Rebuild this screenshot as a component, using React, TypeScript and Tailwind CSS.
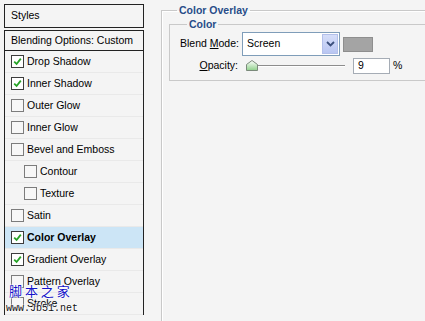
import React from 'react';

type StyleItem = { label: string; checked: boolean; indent?: boolean; active?: boolean };

const items: StyleItem[] = [
  { label: 'Drop Shadow', checked: true },
  { label: 'Inner Shadow', checked: true },
  { label: 'Outer Glow', checked: false },
  { label: 'Inner Glow', checked: false },
  { label: 'Bevel and Emboss', checked: false },
  { label: 'Contour', checked: false, indent: true },
  { label: 'Texture', checked: false, indent: true },
  { label: 'Satin', checked: false },
  { label: 'Color Overlay', checked: true, active: true },
  { label: 'Gradient Overlay', checked: true },
  { label: 'Pattern Overlay', checked: false },
  { label: 'Stroke', checked: false },
];

function CheckBox({ checked }: { checked: boolean }) {
  return (
    <span
      className={`w-[13px] h-[13px] shrink-0 border flex items-center justify-center ${
        checked ? 'bg-white border-[#3c3c3c]' : 'bg-[#f7f7f7] border-[#7c7c7c]'
      }`}
    >
      {checked && (
        <svg width="9" height="9" viewBox="0 0 9 9">
          <path d="M1.2 4.6 L3.6 7 L7.8 1.6" fill="none" stroke="#27a327" strokeWidth="1.8" />
        </svg>
      )}
    </span>
  );
}

function SliderThumb() {
  return (
    <svg width="12" height="11" viewBox="0 0 12 11">
      <defs>
        <linearGradient id="thumbFill" x1="0" y1="0" x2="0" y2="1">
          <stop offset="0" stopColor="#ffffff" />
          <stop offset="1" stopColor="#8fd08a" />
        </linearGradient>
      </defs>
      <path d="M6 0.5 L11.5 4.5 L11.5 10.5 L0.5 10.5 L0.5 4.5 Z" fill="url(#thumbFill)" stroke="#7b8a7b" />
    </svg>
  );
}

export default function App() {
  return (
    <div className="relative w-[425px] h-[321px] overflow-hidden flex bg-[#f4f4f4] text-black text-[10.5px] font-['Liberation_Sans',Arial,sans-serif]">
      {/* styles list */}
      <div className="w-[144px] shrink-0 pl-[4px] pt-[4px] flex flex-col">
        <div className="h-[24px] border border-[#222] flex items-center pl-[6px]">Styles</div>
        <div className="mt-[2px] h-[21px] border border-[#222] flex items-center pl-[6px]">
          Blending Options: Custom
        </div>
        <div className="border-x border-[#222] flex flex-col">
          {items.map((item) => (
            <div
              key={item.label}
              className={`h-[22px] shrink-0 flex items-center gap-[3px] border-b border-[#e9e9e9] ${
                item.indent ? 'pl-[19px]' : 'pl-[6px]'
              } ${item.active ? 'bg-[#cce5f6] font-bold' : ''}`}
            >
              <CheckBox checked={item.checked} />
              <span>{item.label}</span>
            </div>
          ))}
        </div>
      </div>

      {/* settings */}
      <div className="flex-1 overflow-hidden">
        <fieldset className="ml-[17px] mt-[4px] w-[300px] h-[400px] border border-[#c9c9c9] shadow-[inset_1px_1px_0_#fff] px-[7px]">
          <legend className="ml-[8px] px-[2px] leading-[13px] font-bold text-[#284c88]">Color Overlay</legend>
          <fieldset className="mt-[1px] w-[290px] border border-[#c9c9c9] pl-[10px] pb-[6px]">
            <legend className="ml-[7px] px-[2px] leading-[13px] font-bold text-[#284c88]">Color</legend>

            <div className="mt-[1px] h-[24px] flex items-center">
              <span className="w-[58px] text-right whitespace-nowrap">
                Blend <span className="underline">M</span>ode:
              </span>
              <div className="ml-[4px] w-[98px] h-[24px] bg-white border border-[#7f9db9] flex items-center justify-between">
                <span className="pl-[4px]">Screen</span>
                <span className="mr-[1px] w-[16px] h-[20px] border border-[#b3c0ea] bg-gradient-to-b from-[#d6def9] to-[#b9c6f2] flex items-center justify-center">
                  <svg width="9" height="6" viewBox="0 0 9 6">
                    <path d="M1 1 L4.5 4.5 L8 1" fill="none" stroke="#3b4f7c" strokeWidth="1.8" />
                  </svg>
                </span>
              </div>
              <div className="ml-[3px] w-[30px] h-[15px] bg-[#a4a4a4] border border-[#8e8e8e]" />
            </div>

            <div className="mt-[2px] h-[16px] flex items-center">
              <span className="w-[58px] text-right whitespace-nowrap">
                <span className="underline">O</span>pacity:
              </span>
              <div className="ml-[4px] w-[103px] h-[16px] relative">
                <div className="absolute left-[6px] right-0 top-[7px] h-[2px] border-t border-[#8d8d8d] border-b border-b-white" />
                <div className="absolute left-[4px] top-[2px] flex">
                  <SliderThumb />
                </div>
              </div>
              <div className="ml-[8px] w-[37px] h-[16px] bg-white border border-[#a5acb5] flex items-center pl-[4px]">9</div>
              <span className="ml-[3px]">%</span>
            </div>
          </fieldset>
        </fieldset>
      </div>

      {/* watermark */}
      <div className="absolute left-[9px] top-[283px] flex flex-col [text-shadow:0_0_2px_#fff,0_0_2px_#fff,0_0_2px_#fff,0_0_1px_#fff]">
        <span className="text-[13px] leading-[16px] text-[#1414c8] whitespace-pre font-['Noto_Sans_CJK_SC',sans-serif]">脚 本 之 家</span>
        <span className="-ml-[3px] mt-[3px] text-[10px] leading-[14px] text-[#111] font-['Liberation_Mono',monospace]">www.Jb51.net</span>
      </div>
    </div>
  );
}
